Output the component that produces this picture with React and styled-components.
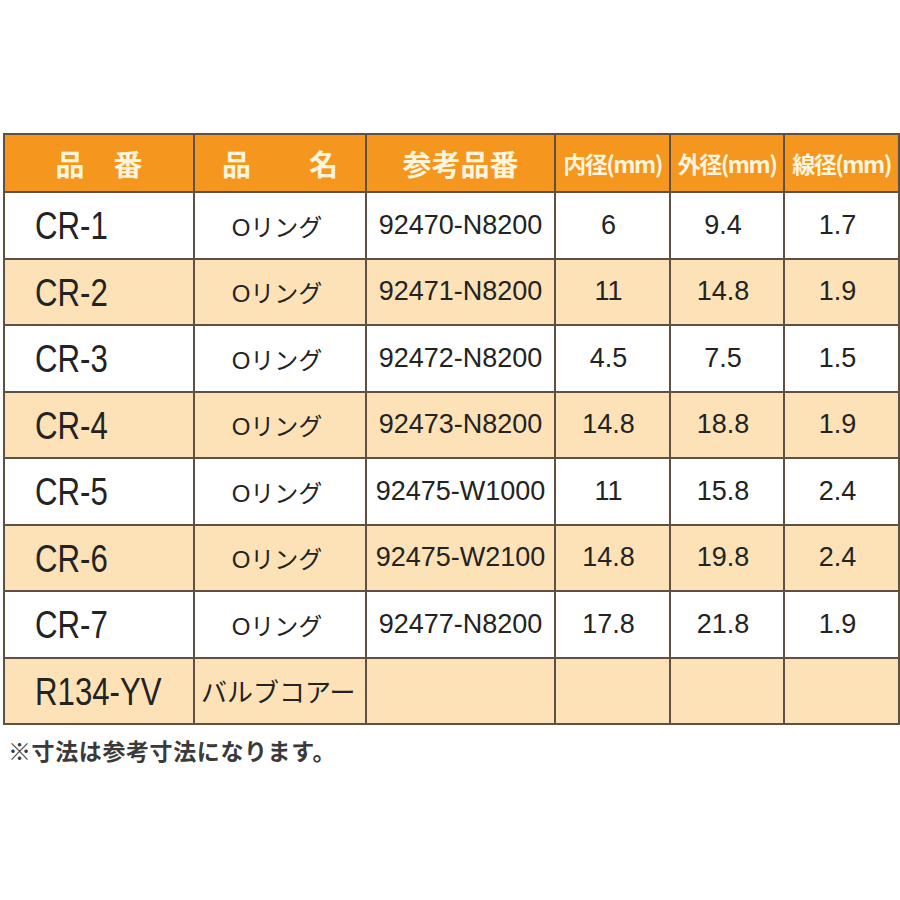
import React from "react";
import styled, { createGlobalStyle } from "styled-components";

const GlobalStyle = createGlobalStyle`
  body {
    margin: 0;
    background: #ffffff;
    font-family: "Liberation Sans", "Noto Sans CJK JP", sans-serif;
  }
`;

const rows = [
  { code: "CR-1", name: "Oリング", ref: "92470-N8200", inner: "6", outer: "9.4", wire: "1.7" },
  { code: "CR-2", name: "Oリング", ref: "92471-N8200", inner: "11", outer: "14.8", wire: "1.9" },
  { code: "CR-3", name: "Oリング", ref: "92472-N8200", inner: "4.5", outer: "7.5", wire: "1.5" },
  { code: "CR-4", name: "Oリング", ref: "92473-N8200", inner: "14.8", outer: "18.8", wire: "1.9" },
  { code: "CR-5", name: "Oリング", ref: "92475-W1000", inner: "11", outer: "15.8", wire: "2.4" },
  { code: "CR-6", name: "Oリング", ref: "92475-W2100", inner: "14.8", outer: "19.8", wire: "2.4" },
  { code: "CR-7", name: "Oリング", ref: "92477-N8200", inner: "17.8", outer: "21.8", wire: "1.9" },
  { code: "R134-YV", name: "バルブコアー", ref: "", inner: "", outer: "", wire: "", wide: true },
];

const Page = styled.div`
  padding: 133px 0 0 3px;
  width: 900px;
  height: 900px;
  box-sizing: border-box;
`;

const Table = styled.table`
  border-collapse: collapse;
  table-layout: fixed;
  width: 895px;
  color: #232323;
`;

const HeadRow = styled.tr`
  height: 58px;
  background: #f5961f;
`;

const HeadCell = styled.th`
  border: 2px solid #5f5044;
  padding: 0;
  color: #fff4dc;
  font-family: "Noto Sans CJK JP", sans-serif;
  font-weight: 700;
  font-size: ${(p) => (p.small ? "23px" : "29px")};
  letter-spacing: ${(p) => (p.small ? "-1.5px" : "0")};
  white-space: nowrap;
  text-align: center;
`;

const Row = styled.tr`
  height: 66.5px;
  background: ${(p) => (p.shaded ? "#fde2b7" : "#ffffff")};
`;

const CodeCell = styled.td`
  border: 2px solid #5f5044;
  padding: 2px 0 0 30px;
  text-align: left;
  white-space: nowrap;
  overflow: hidden;
`;

const CodeText = styled.span`
  display: inline-block;
  font-family: "Liberation Sans", sans-serif;
  font-size: 39px;
  transform: scaleX(0.8);
  transform-origin: left center;
`;

const NameCell = styled.td`
  border: 2px solid #5f5044;
  padding: ${(p) => (p.wide ? "0 0 0 6px" : "0 6px 0 0")};
  font-family: "Liberation Sans", "Noto Sans CJK JP", sans-serif;
  font-size: ${(p) => (p.wide ? "26px" : "24px")};
  text-align: ${(p) => (p.wide ? "left" : "center")};
  white-space: nowrap;
`;

const NumCell = styled.td`
  border: 2px solid #5f5044;
  padding: 0 ${(p) => (p.pad ? "8px" : "0")} 0 0;
  font-family: "Liberation Sans", sans-serif;
  font-size: 27px;
  letter-spacing: 0;
  text-align: center;
  white-space: nowrap;
`;

const Note = styled.p`
  margin: 8px 0 0 5px;
  font-family: "Noto Sans CJK JP", sans-serif;
  font-weight: 700;
  font-size: 23px;
  color: #3a3a3a;
  letter-spacing: 0.6px;
`;

export default function App() {
  return (
    <Page>
      <GlobalStyle />
      <Table>
        <colgroup>
          <col style={{ width: 190 }} />
          <col style={{ width: 172 }} />
          <col style={{ width: 189 }} />
          <col style={{ width: 115 }} />
          <col style={{ width: 114 }} />
          <col style={{ width: 115 }} />
        </colgroup>
        <thead>
          <HeadRow>
            <HeadCell>品　番</HeadCell>
            <HeadCell>品　　名</HeadCell>
            <HeadCell>参考品番</HeadCell>
            <HeadCell small>内径(mm)</HeadCell>
            <HeadCell small>外径(mm)</HeadCell>
            <HeadCell small>線径(mm)</HeadCell>
          </HeadRow>
        </thead>
        <tbody>
          {rows.map((r, i) => (
            <Row key={r.code} shaded={i % 2 === 1}>
              <CodeCell>
                <CodeText>{r.code}</CodeText>
              </CodeCell>
              <NameCell wide={r.wide}>{r.name}</NameCell>
              <NumCell>{r.ref}</NumCell>
              <NumCell pad>{r.inner}</NumCell>
              <NumCell pad>{r.outer}</NumCell>
              <NumCell pad>{r.wire}</NumCell>
            </Row>
          ))}
        </tbody>
      </Table>
      <Note>※寸法は参考寸法になります。</Note>
    </Page>
  );
}
